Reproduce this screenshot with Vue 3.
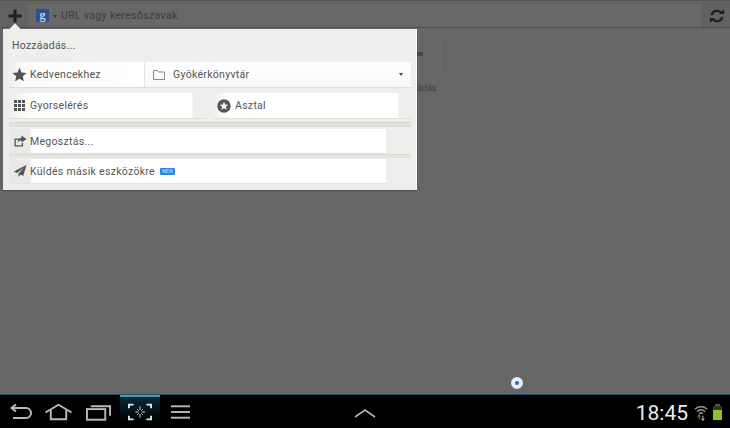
<template>
  <div class="screen">
    <header class="toolbar">
      <button class="plus">
        <svg width="14" height="14" viewBox="0 0 14 14"><path d="M5.500 .5h3v5h5v3h-5v5h-3v-5h-5v-3h5z" fill="#1f1f1f" /></svg>
      </button>
      <div class="urlbar">
        <span class="glogo">g</span>
        <span class="caret"></span>
        <span class="urltext">URL vagy keresőszavak</span>
      </div>
      <button class="reload">
        <svg width="16" height="16" viewBox="0 0 16 16" fill="none" stroke="#1e1e1e" stroke-width="2.2">
          <path d="M2.600 7a5.500 5.500 0 0 1 9.600-2.200" />
          <path d="M13.400 9a5.500 5.500 0 0 1-9.600 2.200" />
          <path d="M10.200 6h5V1z" fill="#1e1e1e" stroke="none" />
          <path d="M5.800 10h-5v5z" fill="#1e1e1e" stroke="none" />
        </svg>
      </button>
    </header>

    <main class="page">
      <div class="ghost-tile"><span class="ghost-mark"></span></div>
      <span class="ghost-label">ádás</span>
      <span class="touch-dot"></span>

      <section class="popup">
        <span class="arrow"></span>
        <h3 class="popup-title">Hozzáadás...</h3>

        <div class="row row-split">
          <div class="cell cell-fav">
            <span class="icon-box">
              <svg width="15" height="15" viewBox="0 0 16 16"><path d="M8 .8l2.200 5 5.400.5-4.100 3.600 1.200 5.300L8 12.400l-4.700 2.800 1.200-5.300L.4 6.300l5.400-.5z" fill="#555" /></svg>
            </span>
            <span class="label">Kedvencekhez</span>
          </div>
          <div class="cell cell-folder">
            <svg class="folder" width="14" height="12" viewBox="0 0 14 12" fill="none" stroke="#8a8a8a" stroke-width="1"><path d="M1.500 1.500h4l1 1.500h6v7.500h-11z" /></svg>
            <span class="label">Gyökérkönyvtár</span>
            <span class="dropdown"></span>
          </div>
        </div>

        <div class="row row-pair">
          <div class="half half-left">
            <span class="icon-box">
              <span class="grid-icon">
                <i v-for="n in 9" :key="n"></i>
              </span>
            </span>
            <span class="label">Gyorselérés</span>
          </div>
          <div class="half half-right">
            <svg class="badge-star" width="14" height="14" viewBox="0 0 14 14">
              <circle cx="7" cy="7" r="6.700" fill="#555" />
              <path d="M7 2.800l1.250 2.700 2.950.3-2.200 2 .6 2.900L7 9.200l-2.600 1.500.6-2.900-2.200-2 2.950-.3z" fill="#f2f2f2" />
            </svg>
            <span class="label">Asztal</span>
          </div>
        </div>

        <div class="divider"></div>

        <div class="row row-wide">
          <div class="wide">
            <span class="icon-box">
              <svg width="14" height="14" viewBox="0 0 14 14">
                <path d="M1.500 4.500h4.500v1.300H2.800v5.400h6V9h1.300v3.500H1.500z" fill="#555" />
                <path d="M8.500 1.500L13.500 5 8.500 8.500V6.600C6.800 6.600 5.500 7.200 4.600 9c0-3 1.500-4.800 3.900-5.200z" fill="#555" />
              </svg>
            </span>
            <span class="label">Megosztás...</span>
          </div>
        </div>

        <div class="row row-wide row-last">
          <div class="wide">
            <span class="icon-box">
              <svg width="14" height="14" viewBox="0 0 14 14"><path d="M13.500 1L.8 7.400l3.300 1.600L11 3.500 5.400 9.800V13l2.200-2.400 2.600 1.300z" fill="#555" /></svg>
            </span>
            <span class="label">Küldés másik eszközökre</span>
            <span class="new-badge">NEW</span>
          </div>
        </div>
      </section>
    </main>

    <footer class="navbar">
      <div class="nav-left">
        <svg class="nav-icon back" width="24" height="18" viewBox="0 0 24 18" fill="none" stroke="#b9b9b9" stroke-width="2">
          <path d="M2 5h15a4.500 4.500 0 0 1 0 10H4" />
          <path d="M7 1.500L2.500 5 7 8.500" />
        </svg>
        <svg class="nav-icon home" width="29" height="18" viewBox="0 0 30 18" fill="none" stroke="#b9b9b9" stroke-width="2">
          <path d="M1.500 9.500L15 1.500l13.500 8" />
          <path d="M7 7v9.500h16V7" />
        </svg>
        <svg class="nav-icon recent" width="26" height="18" viewBox="0 0 27 18" fill="none" stroke="#b9b9b9" stroke-width="2">
          <rect x="1" y="6" width="19" height="11" />
          <path d="M5 3h20v10" />
        </svg>
        <div class="capture">
          <svg width="24" height="18" viewBox="0 0 26 18" fill="none" stroke="#dcecf2" stroke-width="2">
            <path d="M1 5V1h5M20 1h5v4M25 13v4h-5M6 17H1v-4" />
            <path d="M13 3v4M13 11v4M8 9h3.500M15 9h3.500" stroke-width="1" />
            <path d="M10 6l1.500 1.500M16 6l-1.500 1.500M10 12l1.500-1.500M16 12l-1.500-1.500" stroke-width="1" />
          </svg>
        </div>
        <svg class="nav-icon menu" width="19" height="14" viewBox="0 0 20 14" fill="#b9b9b9">
          <rect y="0" width="20" height="2" />
          <rect y="6" width="20" height="2" />
          <rect y="12" width="20" height="2" />
        </svg>
      </div>

      <div class="nav-center">
        <svg width="22" height="10" viewBox="0 0 22 10" fill="none" stroke="#b4b4b4" stroke-width="1.600"><path d="M1 9L11 2l10 7" /></svg>
      </div>

      <div class="nav-right">
        <span class="clock">18:45</span>
        <svg class="wifi" width="14" height="17" viewBox="0 0 15 17" fill="none">
          <path d="M1 5a9 9 0 0 1 13 0" stroke="#8c8c8c" stroke-width="1.800" />
          <path d="M3.200 7.500a6 6 0 0 1 8.600 0" stroke="#8c8c8c" stroke-width="1.800" />
          <path d="M5.500 9.800a3 3 0 0 1 4 0" stroke="#8c8c8c" stroke-width="1.800" />
          <path d="M5.500 12v4M5.500 11l-1.500 2M5.500 11l1.500 2" stroke="#c98a4a" stroke-width="1" />
          <path d="M9.500 16v-4M9.500 17l-1.500-2M9.500 17l1.500-2" stroke="#e0e0e0" stroke-width="1" />
        </svg>
        <span class="battery"><i></i></span>
      </div>
    </footer>
  </div>
</template>

<script setup>
</script>

<style scoped>
.screen {
  width: 730px;
  height: 428px;
  display: flex;
  flex-direction: column;
  overflow: hidden;
  background: #666;
  font-family: Roboto, "Liberation Sans", sans-serif;
}

/* felső sáv */
.toolbar {
  height: 28px;
  box-sizing: border-box;
  display: flex;
  align-items: center;
  padding-top: 3px;
  background: #626262;
  border-top: 1px solid #555;
  border-bottom: 1px solid #505050;
}

.plus,
.reload {
  border: 0;
  background: none;
  padding: 0;
  display: flex;
  align-items: center;
  justify-content: center;
}

.plus {
  width: 28px;
  height: 23px;
  padding-left: 2px;
  box-sizing: border-box;
}

.reload {
  width: 27px;
  height: 23px;
}

.urlbar {
  flex: 1;
  height: 23px;
  display: flex;
  align-items: center;
  background: #686868;
  border-right: 1px solid #5a5a5a;
  box-sizing: border-box;
  padding-left: 8px;
}

.glogo {
  width: 13px;
  height: 13px;
  background: #2c5090;
  color: #c2cde0;
  font: bold 12px/12px "Liberation Serif", serif;
  text-align: center;
}

.caret {
  width: 0;
  height: 0;
  margin: 2px 3px 0 4px;
  border: 2px solid transparent;
  border-top: 3px solid #3a3a3a;
  border-bottom: 0;
}

.urltext {
  margin-left: 1px;
  color: #3c3c3c;
  font-size: 10.5px;
  letter-spacing: 0.35px;
}

/* elsötétített oldal */
.page {
  position: relative;
  flex: 1;
  background: #666;
}

.ghost-tile {
  position: absolute;
  left: 404px;
  top: 7px;
  width: 35px;
  height: 38px;
  border: 1px solid #6b6b6b;
}

.ghost-mark {
  position: absolute;
  left: 12px;
  top: 16px;
  width: 6px;
  height: 4px;
  background: #484848;
}

.ghost-label {
  position: absolute;
  left: 417px;
  top: 55px;
  color: #3f3f3f;
  font-size: 9px;
}

.touch-dot {
  position: absolute;
  left: 511px;
  top: 349px;
  width: 4px;
  height: 4px;
  border: 4px solid #e8edf2;
  border-radius: 50%;
  background: #1a6fd6;
}

/* felugró panel */
.popup {
  position: absolute;
  left: 3px;
  top: 1px;
  width: 414px;
  height: 161px;
  box-sizing: border-box;
  padding: 0 5px 4px 6px;
  background: #eeeeec;
  border-right: 1px solid #fafafa;
  display: flex;
  flex-direction: column;
  box-shadow: 0 1px 1px #4f4f4f;
}

.arrow {
  position: absolute;
  left: 8px;
  top: -4px;
  width: 8px;
  height: 8px;
  background: #eeeeec;
  transform: rotate(45deg);
}

.popup-title {
  margin: 0;
  height: 33px;
  line-height: 33px;
  padding-left: 3px;
  font-size: 10.5px;
  font-weight: 400;
  letter-spacing: 0.25px;
  color: #555;
}

.row {
  display: flex;
  height: 25px;
  flex-shrink: 0;
}

.label {
  color: #555;
  font-size: 10.5px;
  letter-spacing: 0.3px;
  white-space: nowrap;
}

.icon-box {
  width: 21px;
  height: 100%;
  flex-shrink: 0;
  display: flex;
  align-items: center;
  justify-content: center;
}

.row-split {
  border-bottom: 1px solid #dededa;
}

.cell {
  display: flex;
  align-items: center;
}

.cell-fav {
  width: 135px;
  background: linear-gradient(90deg, #ededeb, #fbfbfb 14px, #fff);
}

.cell-folder {
  flex: 1;
  position: relative;
  border-left: 1px solid #e4e4e2;
  padding-left: 7px;
  background: linear-gradient(#fff, #f7f7f7);
}

.folder {
  margin-right: 7px;
}

.dropdown {
  position: absolute;
  right: 8px;
  top: 11px;
  border: 2px solid transparent;
  border-top: 3px solid #444;
  border-bottom: 0;
}

.row-pair {
  margin-top: 5px;
  height: 26px;
  gap: 8px;
}

.half {
  display: flex;
  align-items: center;
  border-bottom: 1px solid #dededa;
  box-sizing: border-box;
}

.half-left {
  width: 197px;
  background: linear-gradient(90deg, #ededeb 0, #fff 22px, #fff calc(100% - 14px), #eeeeec calc(100% - 13px));
}

.half-right {
  flex: 1;
  padding-left: 3px;
  background: linear-gradient(90deg, #eeeeec 0, #fff 14px, #fff calc(100% - 13px), #eeeeec calc(100% - 12px));
}

.badge-star {
  margin-right: 4px;
}

.grid-icon {
  display: grid;
  grid-template-columns: repeat(3, 3px);
  gap: 1px;
}

.grid-icon i {
  height: 3px;
  background: #555;
}

.divider {
  height: 5px;
  margin-top: 3px;
  background: #e2e2de;
  border-top: 1px solid #d8d8d4;
  border-bottom: 1px solid #dadad6;
  box-sizing: border-box;
}

.row-wide {
  margin-top: 2px;
}

.row-last {
  margin-top: 5px;
  position: relative;
}

.row-last::before {
  content: "";
  position: absolute;
  left: 0;
  right: 0;
  top: -5px;
  height: 4px;
  background: #e4e4e0;
  border-top: 1px solid #dadad6;
  box-sizing: border-box;
}

.wide {
  width: 377px;
  display: flex;
  align-items: center;
  background: linear-gradient(90deg, #e9e9e7 0, #e9e9e7 20px, #fff 24px, #fff 100%);
  border-bottom: 1px solid #e4e4e2;
  box-sizing: border-box;
}

.new-badge {
  margin-left: 5px;
  width: 15px;
  height: 7px;
  background: #2a86e0;
  border-radius: 1px;
  color: #cfe6ff;
  font-size: 5px;
  line-height: 7px;
  text-align: center;
}

/* alsó sáv */
.navbar {
  height: 34px;
  flex-shrink: 0;
  display: flex;
  background: #000;
  border-top: 1px solid #2c5060;
  box-sizing: border-box;
  position: relative;
}

.nav-left {
  display: flex;
  align-items: center;
  width: 340px;
  padding-left: 9px;
  box-sizing: border-box;
}

.nav-icon {
  display: block;
}

.home {
  margin-left: 11px;
}

.recent {
  margin-left: 13px;
}

.capture {
  width: 40px;
  height: 33px;
  margin-left: 8px;
  margin-top: -1px;
  display: flex;
  align-items: center;
  justify-content: center;
  border-top: 2px solid #3f9cc4;
  box-sizing: border-box;
  background: linear-gradient(#0c2a38, #000 80%);
}

.menu {
  margin-left: 11px;
}

.nav-center {
  width: 50px;
  display: flex;
  align-items: center;
  justify-content: center;
  padding-top: 3px;
  box-sizing: border-box;
}

.nav-right {
  flex: 1;
  display: flex;
  align-items: center;
  justify-content: flex-end;
  padding: 2px 8px 0 0;
}

.clock {
  color: #ececec;
  font-size: 21px;
  margin-right: 6px;
}

.wifi {
  margin-right: 5px;
}

.battery {
  position: relative;
  width: 9px;
  height: 14px;
  background: #333;
  display: flex;
  align-items: flex-end;
}

.battery::before {
  content: "";
  position: absolute;
  left: 2px;
  top: -2px;
  width: 5px;
  height: 2px;
  background: #555;
}

.battery i {
  width: 100%;
  height: 10px;
  background: #8fc31f;
}
</style>
